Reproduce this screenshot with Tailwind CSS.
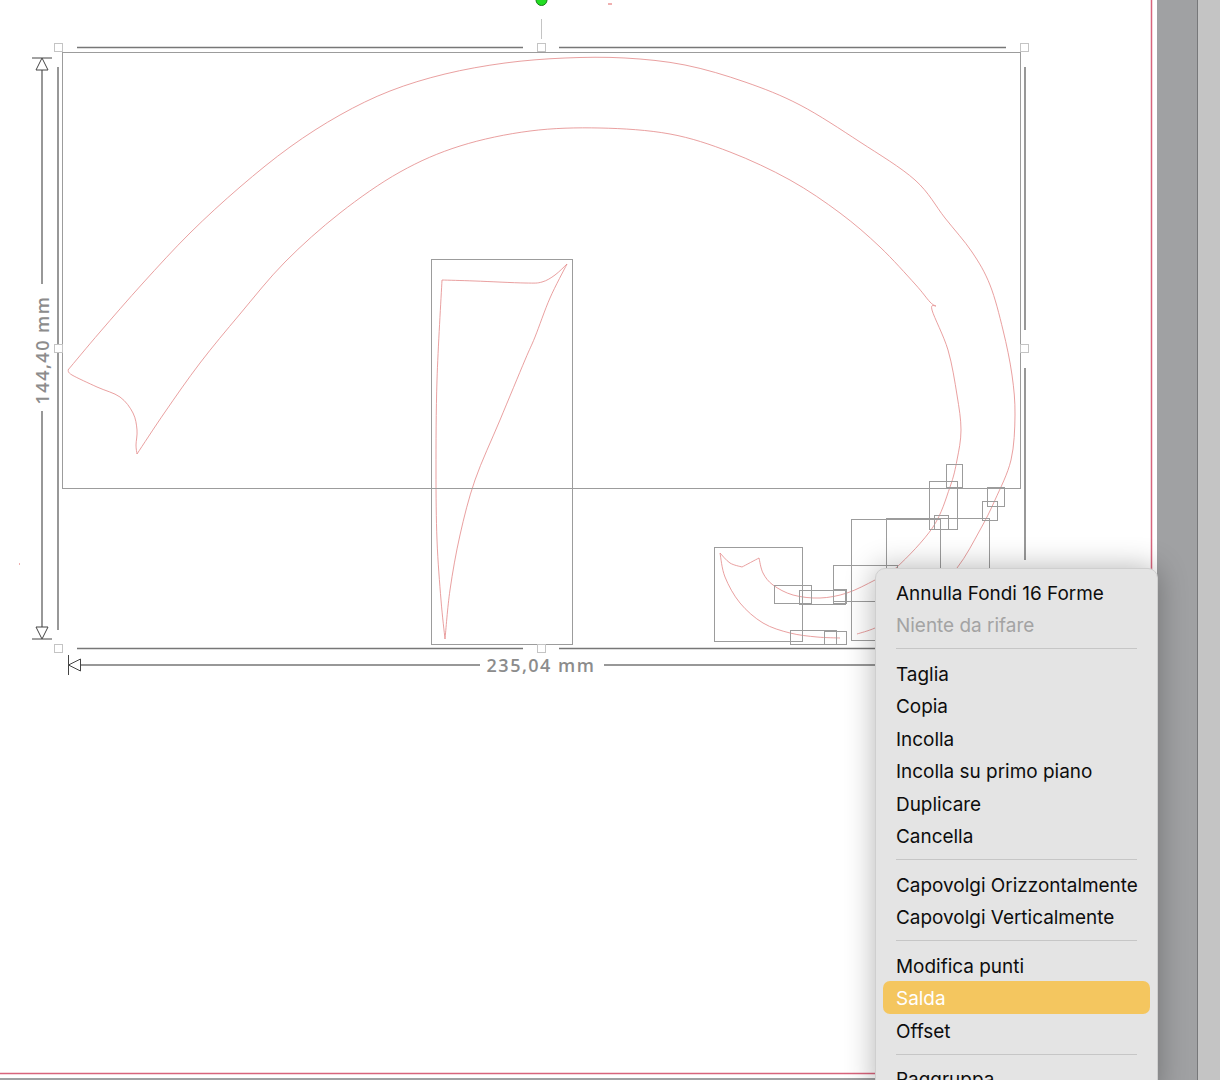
<!DOCTYPE html>
<html lang="it">
<head>
  <meta charset="UTF-8" />
  <title>Salda</title>
  <script src="https://cdn.jsdelivr.net/npm/@tailwindcss/browser@4"></script>
</head>
<body class="bg-[#c4c4c4] font-['Inter','Liberation_Sans',sans-serif]">
  <div class="relative flex w-[1220px] h-[1080px] overflow-hidden">
    <!-- pagina -->
    <div class="w-[1157px] h-[1080px] shrink-0 bg-[#a0a1a3]">
      <div class="w-[1157px] h-[1078px] bg-white">
        <svg class="block" width="1157" height="1078" viewBox="0 0 1157 1078" fill="none">
          <!-- bordo pagina -->
          <path d="M1151.500 0V1073.500H0" stroke="#d8647c" stroke-width="1.500"/>

          <!-- forme, tracciato riempito dallo script -->
          <path id="shapes" stroke="#e58f8f" stroke-width="0.850"/>
          <path d="M608 4H612M19 564H20" stroke="#e06060" stroke-width="1"/>

          <!-- riquadri delle forme -->
          <g stroke="#9c9c9c" stroke-width="1">
            <rect x="62.500" y="52.500" width="958" height="436"/>
            <rect x="431.500" y="259.500" width="141" height="385"/>
            <rect x="714.500" y="547.500" width="88" height="94"/>
            <rect x="774.500" y="585.500" width="37" height="18"/>
            <rect x="799.500" y="590.500" width="46" height="14"/>
            <rect x="833.500" y="589.500" width="13" height="14"/>
            <rect x="790.500" y="630.500" width="46" height="14"/>
            <rect x="824.500" y="631.500" width="22" height="13"/>
            <rect x="833.500" y="565.500" width="64" height="36"/>
            <rect x="851.500" y="519.500" width="89" height="121"/>
            <rect x="886.500" y="518.500" width="103" height="100"/>
            <rect x="929.500" y="481.500" width="28" height="48"/>
            <rect x="934.500" y="515.500" width="14" height="14"/>
            <rect x="946.500" y="464.500" width="16" height="23"/>
            <rect x="982.500" y="501.500" width="15" height="19"/>
            <rect x="987.500" y="487.500" width="17" height="19"/>
          </g>

          <!-- cornice di selezione -->
          <path d="M77 47.500H523M559 47.500H1006M77 648.500H523M559 648.500H880M58 67V630M1025 67V330M1025 368V560" stroke="#777" stroke-width="1.500"/>
          <path d="M541.500 19V39" stroke="#c4c4c4" stroke-width="1"/>
          <g fill="#fff" stroke="#c4c4c4" stroke-width="1">
            <rect x="54.500" y="43.500" width="8" height="8"/>
            <rect x="537.500" y="43.500" width="8" height="8"/>
            <rect x="1020.500" y="43.500" width="8" height="8"/>
            <rect x="54.500" y="344.500" width="8" height="8"/>
            <rect x="1020.500" y="344.500" width="8" height="8"/>
            <rect x="54.500" y="644.500" width="8" height="8"/>
            <rect x="537.500" y="644.500" width="8" height="8"/>
          </g>
          <circle cx="541.500" cy="0" r="5.500" fill="#22dd22" stroke="#1c7a1c" stroke-width="1"/>

          <!-- quota verticale -->
          <path d="M42 70V284M42 411V627" stroke="#777" stroke-width="1.500"/>
          <path d="M32 58H52M32 639H52" stroke="#444" stroke-width="1"/>
          <path d="M42 58L48 70H36ZM42 639L48 627H36Z" stroke="#444" stroke-width="1" fill="#fff"/>
          <text transform="translate(49 350) rotate(-90)" text-anchor="middle" font-family="Open Sans" font-weight="600" font-size="18" letter-spacing="1.500" fill="#8c8c8c">144,40 mm</text>

          <!-- quota orizzontale -->
          <path d="M81 665H480M604 665H880" stroke="#777" stroke-width="1.500"/>
          <path d="M68.500 655V675" stroke="#444" stroke-width="1"/>
          <path d="M68.500 665L80.500 659V671Z" stroke="#444" stroke-width="1" fill="#fff"/>
          <text x="541" y="672" text-anchor="middle" font-family="Open Sans" font-weight="600" font-size="18" letter-spacing="1.500" fill="#8c8c8c">235,04 mm</text>
        </svg>
      </div>
    </div>
    <div class="w-[40px] h-[1080px] shrink-0 bg-[#a0a1a3]"></div>
    <div class="w-px h-[1080px] shrink-0 bg-[#77787a]"></div>
    <div class="flex-1 bg-[#c4c4c4]"></div>

    <!-- menu contestuale -->
    <div class="absolute left-[875px] top-[568px] w-[283px] h-[530px] rounded-[10px] bg-[#e4e4e4] border border-[#cfcfcf] pt-[7px] px-[7px] text-[18.950px] text-[#0d0d0d] whitespace-nowrap shadow-[0_0_30px_rgba(0,0,0,0.3)]">
      <div class="h-[32.400px] pt-[2px] leading-[32.400px] px-[13px]">Annulla Fondi 16 Forme</div>
      <div class="h-[32.400px] pt-[2px] leading-[32.400px] px-[13px] text-[#a3a3a3]">Niente da rifare</div>
      <div class="h-[16.300px] flex items-center px-[13px]"><div class="h-px w-full bg-[#c6c6c6]"></div></div>
      <div class="h-[32.400px] pt-[2px] leading-[32.400px] px-[13px]">Taglia</div>
      <div class="h-[32.400px] pt-[2px] leading-[32.400px] px-[13px]">Copia</div>
      <div class="h-[32.400px] pt-[2px] leading-[32.400px] px-[13px]">Incolla</div>
      <div class="h-[32.400px] pt-[2px] leading-[32.400px] px-[13px]">Incolla su primo piano</div>
      <div class="h-[32.400px] pt-[2px] leading-[32.400px] px-[13px]">Duplicare</div>
      <div class="h-[32.400px] pt-[2px] leading-[32.400px] px-[13px]">Cancella</div>
      <div class="h-[16.300px] flex items-center px-[13px]"><div class="h-px w-full bg-[#c6c6c6]"></div></div>
      <div class="h-[32.400px] pt-[2px] leading-[32.400px] px-[13px]">Capovolgi Orizzontalmente</div>
      <div class="h-[32.400px] pt-[2px] leading-[32.400px] px-[13px]">Capovolgi Verticalmente</div>
      <div class="h-[16.300px] flex items-center px-[13px]"><div class="h-px w-full bg-[#c6c6c6]"></div></div>
      <div class="h-[32.400px] pt-[2px] leading-[32.400px] px-[13px]">Modifica punti</div>
      <div class="h-[32.400px] pt-[2px] leading-[32.400px] px-[13px] rounded-[7px] bg-[#f4c65f] text-white">Salda</div>
      <div class="h-[32.400px] pt-[2px] leading-[32.400px] px-[13px]">Offset</div>
      <div class="h-[16.300px] flex items-center px-[13px]"><div class="h-px w-full bg-[#c6c6c6]"></div></div>
      <div class="h-[32.400px] pt-[2px] leading-[32.400px] px-[13px]">Raggruppa</div>
    </div>
  </div>

  <script>
    // ogni tratto finisce su un angolo vivo
    const strokes = [
      [[68,370],[100,332],[143,283],[190,233],[240,187],[290,147],[340,115],[390,91],[445,74],[505,63],[565,58],[625,58],[685,65],[745,82],[800,105],[860,142],[915,180],[945,218],[972,252],[990,285],[1003,330],[1012,375],[1015,415],[1011,460],[995,500],[980,530],[957,568],[925,600]],
      [[68,370],[72,375],[97,387],[120,397],[133,413],[137,430],[136,445],[137,454]],
      [[137,454],[165,412],[200,363],[240,314],[285,262],[340,213],[400,172],[460,146],[530,131],[600,128],[670,134],[730,152],[790,180],[840,213],[880,247],[915,284],[930,302],[936,306]],
      [[936,306],[932,310],[948,350],[957,395],[961,430],[957,460],[950,487],[933,527],[897,567],[875,580],[847,593],[820,598],[793,595],[773,585],[763,573],[759,558]],
      [[759,558],[742,567]],
      [[742,567],[730,563],[720,553]],
      [[720,553],[725,577],[740,603],[763,623],[790,633],[817,637],[840,638]],
      [[857,634],[875,628],[900,615]],
      [[442,280],[475,281],[525,283],[542,282],[555,275],[567,264]],
      [[567,264],[550,298],[535,337],[525,360],[500,420],[475,480],[460,535],[450,590],[445,639]],
      [[445,639],[441,600],[437,540],[436,470],[437,380],[442,280]],
    ];

    // Catmull-Rom: la curva passa per tutti i punti
    function smooth(pts) {
      let d = `M${pts[0][0]} ${pts[0][1]}`;
      for (let i = 0; i < pts.length - 1; i++) {
        const p0 = pts[Math.max(i - 1, 0)];
        const p1 = pts[i];
        const p2 = pts[i + 1];
        const p3 = pts[Math.min(i + 2, pts.length - 1)];
        const c1 = [p1[0] + (p2[0] - p0[0]) / 6, p1[1] + (p2[1] - p0[1]) / 6];
        const c2 = [p2[0] - (p3[0] - p1[0]) / 6, p2[1] - (p3[1] - p1[1]) / 6];
        d += `C${c1[0]} ${c1[1]} ${c2[0]} ${c2[1]} ${p2[0]} ${p2[1]}`;
      }
      return d;
    }

    document.getElementById('shapes').setAttribute('d', strokes.map(smooth).join(''));
  </script>
</body>
</html>
